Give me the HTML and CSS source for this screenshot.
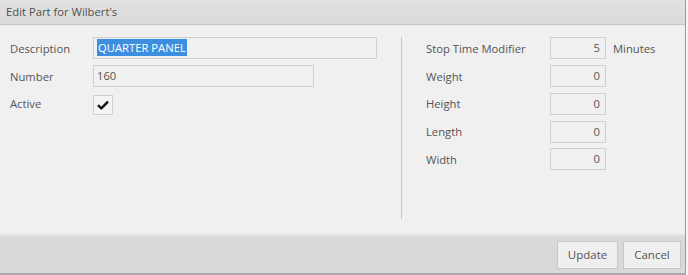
FILE: index.html
```html
<!DOCTYPE html>
<html lang="en">
<head>
  <meta charset="UTF-8">
  <title>Edit Part</title>
  <link rel="stylesheet" href="styles.css">
</head>
<body>
  <div class="dialog">
    <div class="titlebar">Edit Part for Wilbert's</div>

    <div class="content">
      <div class="col left">
        <div class="row">
          <label>Description</label>
          <div class="field wide"><span class="selected">QUARTER PANEL</span></div>
        </div>
        <div class="row">
          <label>Number</label>
          <div class="field mid">160</div>
        </div>
        <div class="row">
          <label>Active</label>
          <div class="check">
            <svg width="12" height="10" viewBox="0 0 12 10">
              <path d="M1 5.2 L4.3 8.4 L11 1.6" fill="none" stroke="#111" stroke-width="2.4" stroke-linejoin="round"/>
            </svg>
          </div>
        </div>
      </div>

      <div class="divider"></div>

      <div class="col right">
        <div class="row">
          <label>Stop Time Modifier</label>
          <div class="field num">5</div>
          <span class="unit">Minutes</span>
        </div>
        <div class="row">
          <label>Weight</label>
          <div class="field num">0</div>
        </div>
        <div class="row">
          <label>Height</label>
          <div class="field num">0</div>
        </div>
        <div class="row">
          <label>Length</label>
          <div class="field num">0</div>
        </div>
        <div class="row">
          <label>Width</label>
          <div class="field num">0</div>
        </div>
      </div>
    </div>

    <div class="footer">
      <button>Update</button>
      <button>Cancel</button>
    </div>
  </div>
</body>
</html>
```

FILE: styles.css
```css
body {
  margin: 0;
  padding: 0;
  background-color: #f4f4f4;
  font-family: "Open Sans", "Liberation Sans", sans-serif;
  font-size: 11.25px;
  color: #555;
}

.dialog {
  width: 685px;
  height: 273px;
  border-right: 1px solid #9a9a9a;
  border-bottom: 2px solid #a8a8a8;
  background-color: #f0f0f0;
  display: flex;
  flex-direction: column;
}

.titlebar {
  height: 24px;
  line-height: 23px;
  padding-left: 6px;
  background: linear-gradient(#e2e2e2, #dadada);
  border-bottom: 1px solid #c4c4c4;
  color: #505050;
}

.content {
  flex: 1;
  display: flex;
  padding: 12px 0 0 10px;
  border-bottom: 1px solid #e2e2e2;
}

.col {
  display: flex;
  flex-direction: column;
  gap: 5.25px;
}

.left {
  width: 391px;
}

.right {
  padding-left: 24px;
}

.row {
  display: flex;
  align-items: center;
  height: 22.5px;
}

.row label {
  width: 83px;
}

.right .row label {
  width: 124px;
}

.field {
  box-sizing: border-box;
  height: 22px;
  line-height: 20px;
  border: 1px solid #cfcfcf;
  background-color: #f0f0f0;
  padding: 0 3px;
  color: #555;
}

.wide {
  width: 284px;
}

.mid {
  width: 221px;
}

.num {
  width: 56px;
  text-align: right;
  padding-right: 5px;
}

.selected {
  background-color: #3b8ee0;
  color: #fff;
  padding: 1px 1px;
}

.check {
  box-sizing: border-box;
  width: 20px;
  height: 20px;
  border: 1px solid #cfcfcf;
  background-color: #f4f4f4;
  display: flex;
  align-items: center;
  justify-content: center;
  margin-top: 3px;
}

.unit {
  margin-left: 7px;
}

.divider {
  width: 1px;
  background-color: #c8c8c8;
  margin-bottom: 15px;
}

.footer {
  height: 37px;
  background-color: #d9d9d9;
  border-top: 1px solid #e8e8e8;
  display: flex;
  justify-content: flex-end;
  align-items: center;
  gap: 5px;
  padding-right: 4px;
}

button {
  font-family: "Open Sans", "Liberation Sans", sans-serif;
  font-size: 11.5px;
  color: #555;
  background-color: #efefef;
  border: 1px solid #c8c8c8;
  height: 28px;
  padding: 0 6px;
  cursor: pointer;
}

button:first-child {
  width: 61px;
}

button:last-child {
  width: 58px;
}
```
